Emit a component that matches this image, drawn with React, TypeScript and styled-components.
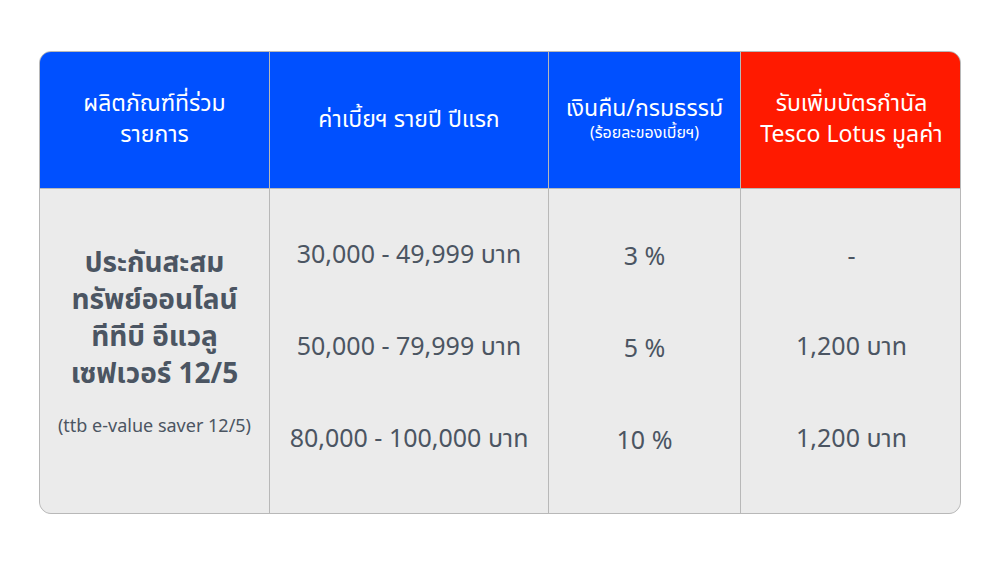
import React from "react";
import styled, { createGlobalStyle } from "styled-components";

const Global = createGlobalStyle`
  html, body { margin: 0; padding: 0; background: #ffffff; }
  body { font-family: "Noto Sans", "Noto Sans Thai", "Open Sans", sans-serif; }
`;

const Page = styled.div`
  width: 1000px;
  height: 563px;
  padding: 51px 0 0 39px;
  box-sizing: border-box;
`;

const Table = styled.div`
  width: 922px;
  height: 463px;
  box-sizing: border-box;
  border: 1px solid #b8b8b8;
  border-radius: 12px;
  overflow: hidden;
  display: grid;
  grid-template-columns: 229px 278px 191px 221px;
  grid-template-rows: 136px 1fr;
  gap: 1px;
  background: #b8b8b8;
`;

const HeadCell = styled.div<{ $red?: boolean }>`
  background: ${(p) => (p.$red ? "#ff1a00" : "#0050ff")};
  color: #ffffff;
  display: flex;
  flex-direction: column;
  align-items: center;
  justify-content: center;
  text-align: center;
  font-size: 23px;
  line-height: 31px;
  padding-bottom: 4px;
`;

const Sub = styled.div`
  font-size: 16px;
  line-height: 18px;
  margin-bottom: 4px;
`;

const BodyCell = styled.div`
  background: #ebebeb;
  color: #4b5562;
  display: flex;
  flex-direction: column;
  align-items: center;
  justify-content: center;
  text-align: center;
`;

const ProductName = styled.div`
  font-size: 28px;
  font-weight: 700;
  line-height: 37px;
`;

const ProductEn = styled.div`
  font-size: 18px;
  line-height: 22px;
  margin-top: 23px;
  margin-bottom: 23px;
`;

const Value = styled.div`
  height: 92px;
  display: flex;
  align-items: center;
  justify-content: center;
  font-size: 25px;
`;

const Values = styled.div`
  display: flex;
  flex-direction: column;
  margin-bottom: 8px;
`;

const rows = [
  ["30,000 - 49,999 บาท", "3 %", "-"],
  ["50,000 - 79,999 บาท", "5 %", "1,200 บาท"],
  ["80,000 - 100,000 บาท", "10 %", "1,200 บาท"],
];

export default function App() {
  return (
    <>
      <Global />
      <Page>
        <Table>
          <HeadCell>
            <div>ผลิตภัณฑ์ที่ร่วม</div>
            <div>รายการ</div>
          </HeadCell>
          <HeadCell>
            <div>ค่าเบี้ยฯ รายปี ปีแรก</div>
          </HeadCell>
          <HeadCell>
            <div>เงินคืน/กรมธรรม์</div>
            <Sub>(ร้อยละของเบี้ยฯ)</Sub>
          </HeadCell>
          <HeadCell $red>
            <div>รับเพิ่มบัตรกำนัล</div>
            <div>Tesco Lotus มูลค่า</div>
          </HeadCell>
          <BodyCell>
            <ProductName>
              ประกันสะสม
              <br />
              ทรัพย์ออนไลน์
              <br />
              ทีทีบี อีแวลู
              <br />
              เซฟเวอร์ 12/5
            </ProductName>
            <ProductEn>(ttb e-value saver 12/5)</ProductEn>
          </BodyCell>
          {[0, 1, 2].map((c) => (
            <BodyCell key={c}>
              <Values>
                {rows.map((r, i) => (
                  <Value key={i}>{r[c]}</Value>
                ))}
              </Values>
            </BodyCell>
          ))}
        </Table>
      </Page>
    </>
  );
}
